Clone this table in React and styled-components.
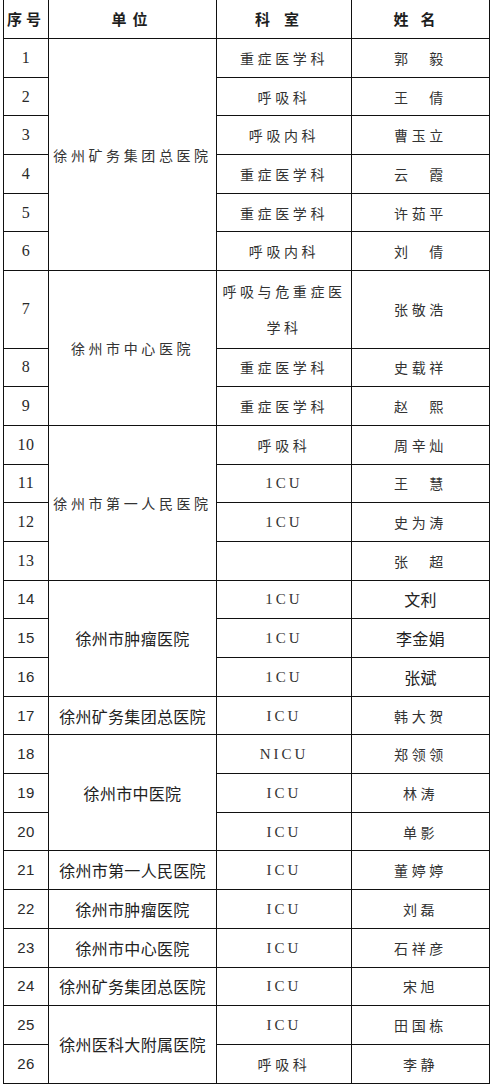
import React from 'react';
import styled, { createGlobalStyle } from 'styled-components';

const GlobalStyle = createGlobalStyle`
  html, body {
    margin: 0;
    padding: 0;
    background: #ffffff;
  }
`;

// unit groups: name, rows covered, wide letter-spacing style or not
const groups = [
  { name: '徐州矿务集团总医院', span: 6, old: true },
  { name: '徐州市中心医院', span: 3, old: true },
  { name: '徐州市第一人民医院', span: 4, old: true },
  { name: '徐州市肿瘤医院', span: 3 },
  { name: '徐州矿务集团总医院', span: 1 },
  { name: '徐州市中医院', span: 3 },
  { name: '徐州市第一人民医院', span: 1 },
  { name: '徐州市肿瘤医院', span: 1 },
  { name: '徐州市中心医院', span: 1 },
  { name: '徐州矿务集团总医院', span: 1 },
  { name: '徐州医科大附属医院', span: 2 },
];

const rows = [
  ['重症医学科', '郭\u3000毅'],
  ['呼吸科', '王\u3000倩'],
  ['呼吸内科', '曹玉立'],
  ['重症医学科', '云\u3000霞'],
  ['重症医学科', '许茹平'],
  ['呼吸内科', '刘\u3000倩'],
  ['呼吸与危重症医学科', '张敬浩'],
  ['重症医学科', '史载祥'],
  ['重症医学科', '赵\u3000熙'],
  ['呼吸科', '周辛灿'],
  ['1CU', '王\u3000慧'],
  ['1CU', '史为涛'],
  ['', '张\u3000超'],
  ['1CU', '文利'],
  ['1CU', '李金娟'],
  ['1CU', '张斌'],
  ['ICU', '韩大贺'],
  ['NICU', '郑领领'],
  ['ICU', '林涛'],
  ['ICU', '单影'],
  ['ICU', '董婷婷'],
  ['ICU', '刘磊'],
  ['ICU', '石祥彦'],
  ['ICU', '宋旭'],
  ['ICU', '田国栋'],
  ['呼吸科', '李静'],
];

const Page = styled.div`
  padding-left: 3px;
  width: 486px;
`;

const Table = styled.table`
  border-collapse: collapse;
  table-layout: fixed;
  width: 486px;
  color: #1e1e1e;
`;

const HeadCell = styled.th`
  height: 38px;
  border: 1px solid #111;
  border-top: none;
  font-family: "Noto Sans CJK SC", sans-serif;
  font-size: 15px;
  font-weight: 700;
  line-height: 20px;
  letter-spacing: ${(p) => p.$gap || '0px'};
  text-align: center;
  padding: 0;
`;

const Row = styled.tr`
  height: ${(p) => (p.$tall ? '77.4px' : '38.7px')};
`;

const Cell = styled.td`
  border: 1px solid #111;
  text-align: center;
  vertical-align: middle;
  padding: 0 2px;
  line-height: 20px;
  font-family: "Noto Sans CJK SC", sans-serif;
  font-size: ${(p) => (p.$old ? '14px' : '16px')};
  letter-spacing: ${(p) => (p.$old ? '3.6px' : '0.3px')};
  color: ${(p) => (p.$old ? '#333333' : '#222222')};
`;

const NumCell = styled(Cell)`
  font-family: ${(p) => (p.$old ? '"Liberation Serif", serif' : '"Liberation Sans", sans-serif')};
  font-size: ${(p) => (p.$old ? '16px' : '15px')};
  letter-spacing: 0.5px;
  color: #2a2a2a;
`;

const CodeCell = styled(Cell)`
  font-family: "Liberation Serif", serif;
  font-size: 15px;
  letter-spacing: 3px;
  color: #333333;
`;

const Wrap = styled.span`
  display: block;
  line-height: 36px;
`;

export default function App() {
  let rowIndex = 0;
  const starts = {};
  groups.forEach((g) => {
    starts[rowIndex] = g;
    rowIndex += g.span;
  });

  return (
    <Page lang="zh-CN">
      <GlobalStyle />
      <Table>
        <colgroup>
          <col style={{ width: 45 }} />
          <col style={{ width: 168 }} />
          <col style={{ width: 135 }} />
          <col style={{ width: 138 }} />
        </colgroup>
        <thead>
          <tr>
            <HeadCell $gap="4px">序号</HeadCell>
            <HeadCell $gap="6px">单位</HeadCell>
            <HeadCell $gap="14px">科室</HeadCell>
            <HeadCell $gap="12px">姓名</HeadCell>
          </tr>
        </thead>
        <tbody>
          {rows.map(([dept, name], i) => {
            const group = starts[i];
            const latin = /^[A-Z0-9]+$/.test(dept);
            return (
              <Row key={i} $tall={i === 6}>
                <NumCell $old={i < 13}>{i + 1}</NumCell>
                {group && (
                  <Cell rowSpan={group.span} $old={group.old}>
                    {group.name}
                  </Cell>
                )}
                {latin ? (
                  <CodeCell $old>{dept}</CodeCell>
                ) : (
                  <Cell $old>
                    {i === 6 ? (
                      <>
                        <Wrap>呼吸与危重症医</Wrap>
                        <Wrap>学科</Wrap>
                      </>
                    ) : (
                      dept
                    )}
                  </Cell>
                )}
                <Cell $old={i < 13 || i >= 16}>{name}</Cell>
              </Row>
            );
          })}
        </tbody>
      </Table>
    </Page>
  );
}
